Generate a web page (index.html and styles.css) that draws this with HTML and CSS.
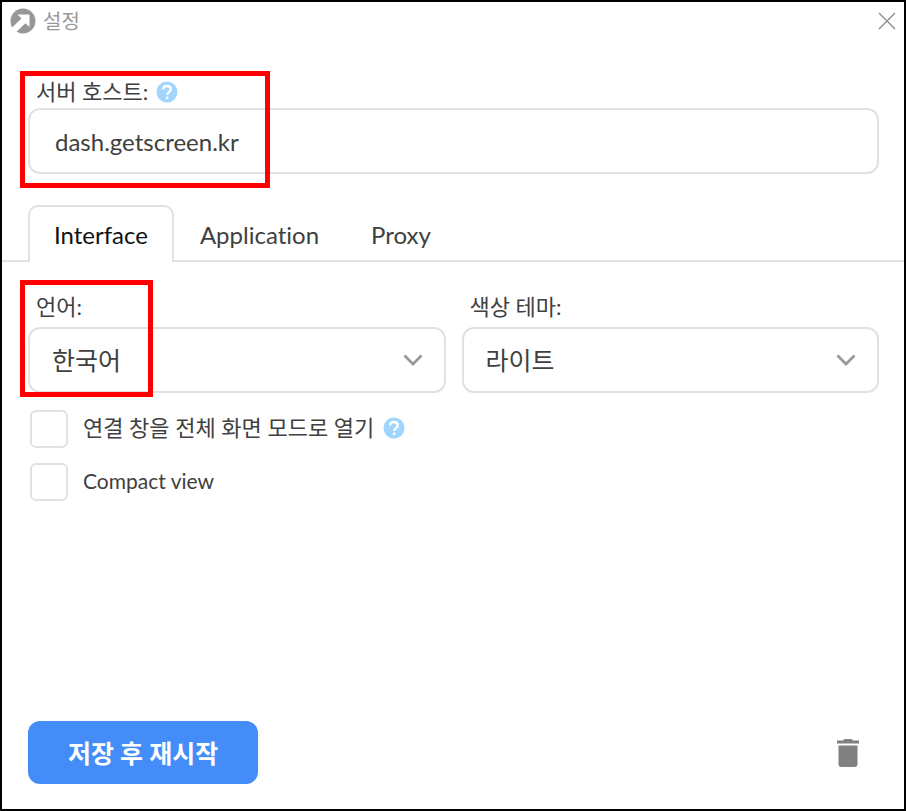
FILE: index.html
```
<!DOCTYPE html>
<html lang="ko">
<head>
  <meta charset="UTF-8">
  <meta name="viewport" content="width=device-width, initial-scale=1.0">
  <title>설정</title>
  <link rel="stylesheet" href="styles.css">
</head>
<body>
<div class="window">
  <header class="titlebar">
    <svg class="logo" viewBox="0 0 26 26" aria-hidden="true">
      <circle cx="13" cy="13" r="12.5" fill="#979797"/>
      <path d="M7.500 6.500h12v12.500l-4-3.800L4.500 25.500 0.500 21 11.500 10.500z" fill="#fff"/>
    </svg>
    <h1>설정</h1>
    <button type="button" class="icon-button close" aria-label="닫기">
      <svg width="18" height="18" viewBox="0 0 18 18"><path d="M1 1l16 16M17 1L1 17" stroke="#919191" stroke-width="1.500"/></svg>
    </button>
  </header>

  <form class="settings">
    <div class="field host">
      <div class="label-row">
        <label for="host">서버 호스트:</label>
        <button type="button" class="icon-button help" aria-label="도움말">
          <svg width="22" height="22" viewBox="0 0 22 22"><circle cx="11" cy="11" r="10.500" fill="#9fd5ff"/><path d="M7.200 8.600c0-2 1.500-3.600 3.800-3.600s3.800 1.400 3.800 3.400c0 2.600-3.700 2.800-3.700 5.600" fill="none" stroke="#fff" stroke-width="2.400"/><path d="M9.900 15.600h2.400v2.400H9.900z" fill="#fff"/></svg>
        </button>
      </div>
      <input type="text" id="host" value="dash.getscreen.kr" spellcheck="false">
      <span class="highlight highlight-host"></span>
    </div>

    <nav class="tabs" role="tablist">
      <button type="button" class="tab active" role="tab" aria-selected="true">Interface</button>
      <button type="button" class="tab" role="tab" aria-selected="false">Application</button>
      <button type="button" class="tab" role="tab" aria-selected="false">Proxy</button>
    </nav>

    <section class="panel">
      <div class="columns">
        <div class="field">
          <div class="label-row"><label for="language">언어:</label></div>
          <div class="select">
            <select id="language">
              <option>한국어</option>
              <option>English</option>
            </select>
            <svg width="20" height="14" viewBox="0 0 20 14" aria-hidden="true"><path d="M1.500 2.500l8.500 8.500 8.500-8.500" fill="none" stroke="#999" stroke-width="2.800"/></svg>
          </div>
          <span class="highlight highlight-language"></span>
        </div>
        <div class="field">
          <div class="label-row"><label for="theme">색상 테마:</label></div>
          <div class="select">
            <select id="theme">
              <option>라이트</option>
              <option>다크</option>
            </select>
            <svg width="20" height="14" viewBox="0 0 20 14" aria-hidden="true"><path d="M1.500 2.500l8.500 8.500 8.500-8.500" fill="none" stroke="#999" stroke-width="2.800"/></svg>
          </div>
        </div>
      </div>

      <div class="checks">
        <div class="check">
          <input type="checkbox" id="fullscreen">
          <label for="fullscreen">연결 창을 전체 화면 모드로 열기</label>
          <button type="button" class="icon-button help" aria-label="도움말">
            <svg width="22" height="22" viewBox="0 0 22 22"><circle cx="11" cy="11" r="10.500" fill="#9fd5ff"/><path d="M7.200 8.600c0-2 1.500-3.600 3.800-3.600s3.800 1.400 3.800 3.400c0 2.600-3.700 2.800-3.700 5.600" fill="none" stroke="#fff" stroke-width="2.400"/><path d="M9.900 15.600h2.400v2.400H9.900z" fill="#fff"/></svg>
          </button>
        </div>
        <div class="check">
          <input type="checkbox" id="compact">
          <label for="compact" class="latin">Compact view</label>
        </div>
      </div>
    </section>

    <footer class="actions">
      <button type="submit" class="save">저장 후 재시작</button>
      <button type="button" class="icon-button trash" aria-label="삭제">
        <svg width="22" height="30" viewBox="0 0 22 30"><path d="M0 2.500h6L7.500 1h7L16 2.500h6v3H0zM1.500 7.500h19v18.500q0 3-3 3h-13q-3 0-3-3z" fill="#808080"/></svg>
      </button>
    </footer>
  </form>
</div>
</body>
</html>
```

FILE: styles.css
```
* {
  margin: 0;
  padding: 0;
  box-sizing: border-box;
}

body {
  font-family: Lato, "Noto Sans CJK KR", sans-serif;
  font-size: 22px;
  font-variant-ligatures: none;
  line-height: 32px;
  color: #404040;
  background: #fff;
}

button,
input,
select {
  font: inherit;
  color: inherit;
}

button {
  border: none;
  background: none;
  cursor: pointer;
}

.window {
  display: flex;
  flex-direction: column;
  min-height: 100vh;
  border: 2px solid #000;
}

.titlebar {
  display: flex;
  align-items: center;
  height: 38px;
  padding: 0 8px;
}

.logo {
  width: 26px;
  height: 26px;
}

h1 {
  flex: 1;
  margin-left: 7px;
  font-size: 20px;
  font-weight: 400;
  color: #999;
}

.icon-button {
  display: flex;
}

.settings {
  flex: 1;
  display: flex;
  flex-direction: column;
}

.field {
  position: relative;
}

.host {
  margin: 36px 25px 31px 26px;
}

.label-row {
  display: flex;
  align-items: center;
  gap: 8px;
  padding-left: 8px;
}

input[type="text"],
select {
  display: block;
  width: 100%;
  height: 66px;
  padding: 0 25px;
  border: 2px solid #e1e1e1;
  border-radius: 12px;
  background: #fff;
  font-size: 25px;
  outline: none;
}

input[type="text"] {
  font-size: 24px;
}

select {
  appearance: none;
  padding: 0 22px;
}

.tabs {
  display: flex;
  padding: 0 26px;
  border-bottom: 2px solid #e1e1e1;
}

.tab {
  height: 57px;
  margin-bottom: -2px;
  padding: 0 24px;
  border: 2px solid transparent;
  border-bottom: none;
  font-size: 24px;
  font-variant-ligatures: none;
}

.tab.active {
  color: #111;
  background: #fff;
  border-color: #e1e1e1;
  border-radius: 10px 10px 0 0;
}

.panel {
  padding: 29px 25px 0 26px;
}

.columns {
  display: grid;
  grid-template-columns: 1fr 1fr;
  gap: 16px;
}

.select {
  display: grid;
  align-items: center;
  margin-top: 4px;
}

.select select,
.select svg {
  grid-area: 1 / 1;
}

.select svg {
  justify-self: end;
  margin-right: 23px;
  pointer-events: none;
}

.checks {
  display: flex;
  flex-direction: column;
  gap: 15px;
  margin-top: 17px;
  padding-left: 2px;
}

.check {
  display: flex;
  align-items: center;
}

.check label {
  margin-left: 15px;
  padding-bottom: 3px;
}

.check .latin {
  font-size: 21px;
}

.check .help {
  margin-left: 9px;
  padding-bottom: 3px;
}

input[type="checkbox"] {
  appearance: none;
  width: 38px;
  height: 38px;
  border: 2px solid #e1e1e1;
  border-radius: 6px;
  background: #fff;
}

input[type="checkbox"]:checked {
  background: #448cf8;
}

.actions {
  display: flex;
  align-items: center;
  justify-content: space-between;
  margin-top: auto;
  padding: 25px 45px 25px 26px;
}

.save {
  height: 63px;
  padding: 0 40px;
  border-radius: 12px;
  background: #448cf8;
  color: #fff;
  font-size: 25px;
  font-weight: 700;
}

/* red callouts over the fields */
.highlight {
  position: absolute;
  border: 5px solid #f00;
  pointer-events: none;
}

.highlight-host {
  top: -5px;
  left: -8px;
  width: 250px;
  height: 117px;
}

.highlight-language {
  top: -11px;
  left: -8px;
  width: 133px;
  height: 117px;
}
```
